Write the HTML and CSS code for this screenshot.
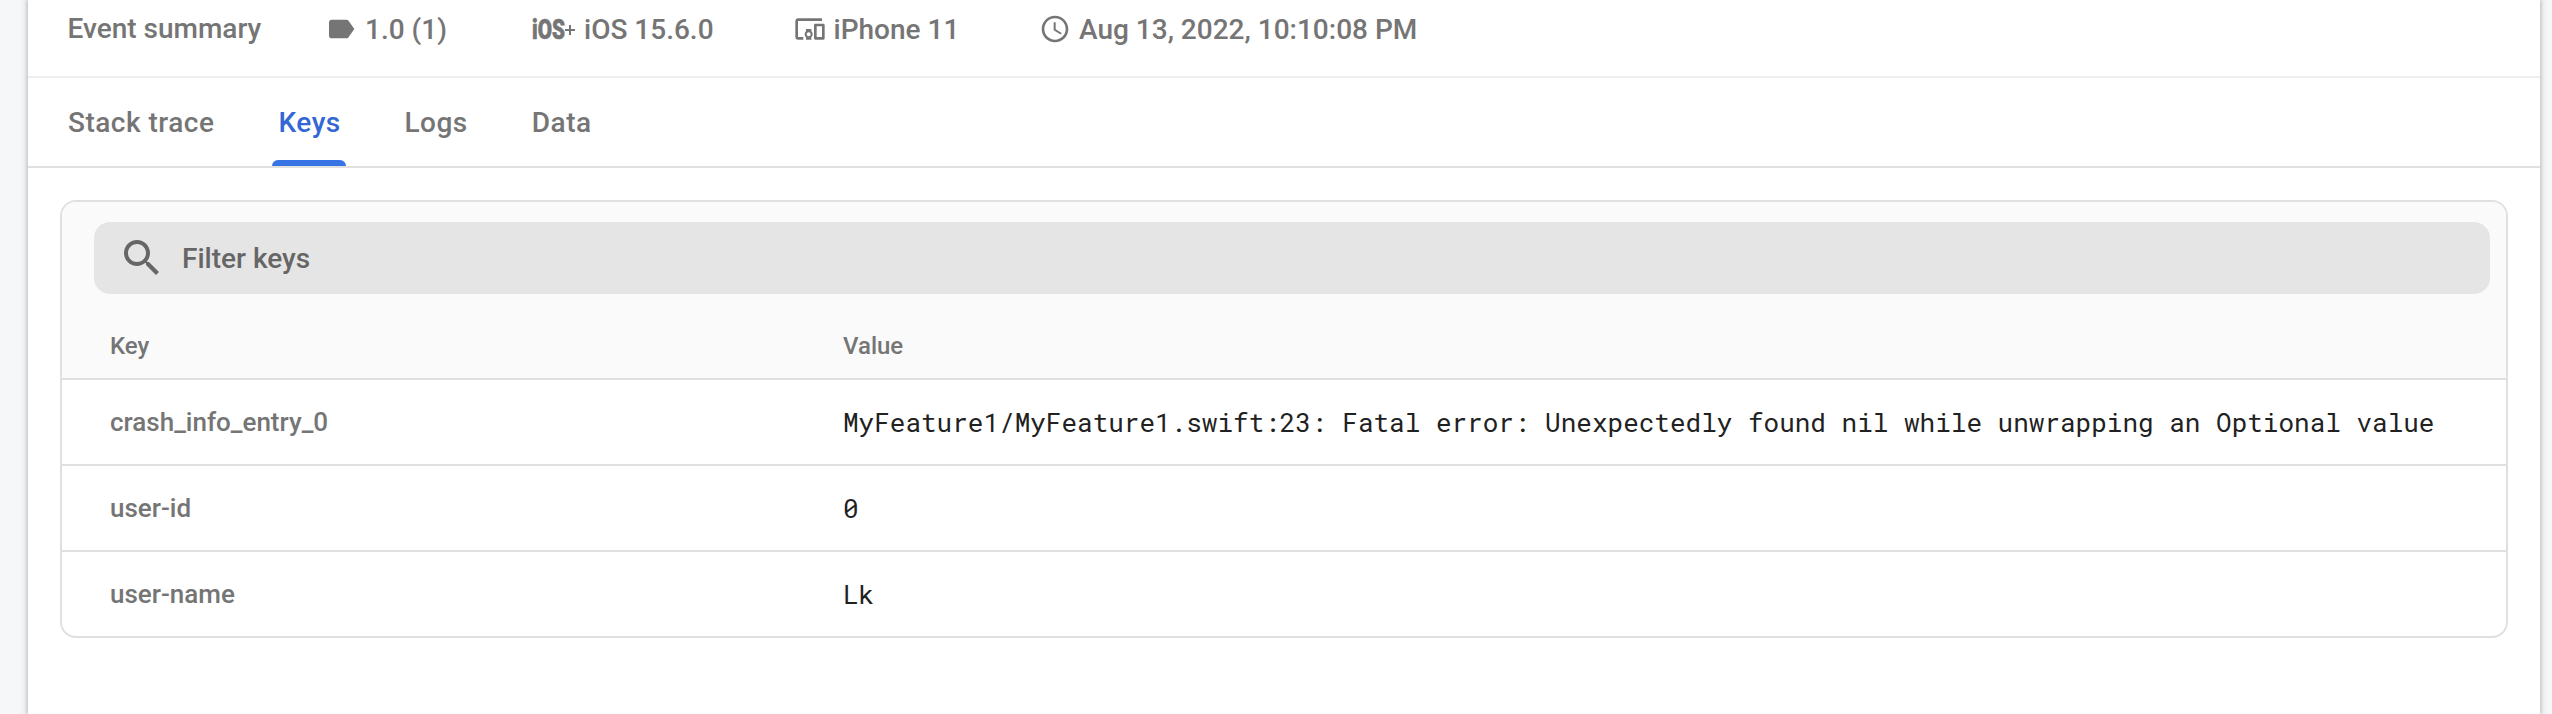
FILE: index.html
```
<!DOCTYPE html>
<html lang="en">
<head>
<meta charset="utf-8">
<title>Event summary</title>
<link rel="stylesheet" href="styles.css">
</head>
<body>
<main class="card">
  <header class="summary">
    <span class="summary-title">Event summary</span>
    <span class="summary-item version">
      <svg class="icon" viewBox="0 0 24 24"><path d="M17.63 5.84C17.27 5.33 16.67 5 16 5L5 5.01C3.9 5.01 3 5.9 3 7v10c0 1.1.9 1.99 2 1.99L16 19c.67 0 1.27-.33 1.63-.84L22 12l-4.37-6.16z"/></svg>
      <span>1.0 (1)</span>
    </span>
    <span class="summary-item platform">
      <svg class="ios-logo" viewBox="0 0 44 32"><text class="ios-name" x="0" y="26" textLength="33" lengthAdjust="spacingAndGlyphs">iOS</text><path d="M33 17h10M38 12v10" fill="none" stroke="currentColor" stroke-width="2"/></svg>
      <span>iOS 15.6.0</span>
    </span>
    <span class="summary-item device">
      <svg class="icon" viewBox="0 0 24 24"><path d="M3 6h18V4H3c-1.100 0-2 .9-2 2v12c0 1.100.9 2 2 2h4v-2H3V6zm10 6H9v1.780c-.61.55-1 1.330-1 2.220s.39 1.670 1 2.220V20h4v-1.780c.61-.55 1-1.340 1-2.220s-.39-1.670-1-2.220V12zm-2 5.500c-.83 0-1.500-.67-1.500-1.500s.67-1.500 1.500-1.500 1.500.67 1.500 1.500-.67 1.500-1.500 1.500zM22 8h-6c-.5 0-1 .5-1 1v10c0 .5.5 1 1 1h6c.5 0 1-.5 1-1V9c0-.5-.5-1-1-1zm-1 10h-4v-8h4v8z"/></svg>
      <span>iPhone 11</span>
    </span>
    <span class="summary-item time">
      <svg class="icon" viewBox="0 0 24 24"><path d="M11.990 2C6.470 2 2 6.480 2 12s4.470 10 9.990 10C17.520 22 22 17.520 22 12S17.520 2 11.990 2zM12 20c-4.420 0-8-3.580-8-8s3.580-8 8-8 8 3.580 8 8-3.580 8-8 8zm.5-13H11v6l5.250 3.150.75-1.230-4.500-2.670z"/></svg>
      <span>Aug 13, 2022, 10:10:08 PM</span>
    </span>
  </header>
  <nav class="tabs">
    <span class="tab">Stack trace</span>
    <span class="tab active">Keys</span>
    <span class="tab">Logs</span>
    <span class="tab">Data</span>
  </nav>
  <section class="panel">
    <div class="panel-head">
      <div class="search">
        <svg class="search-icon" viewBox="0 0 24 24"><path d="M15.500 14h-.79l-.28-.27C15.410 12.590 16 11.110 16 9.500 16 5.910 13.090 3 9.500 3S3 5.910 3 9.500 5.910 16 9.500 16c1.610 0 3.090-.59 4.230-1.570l.27.28v.79l5 4.990L20.490 19l-4.990-5zm-6 0C7.010 14 5 11.990 5 9.500S7.010 5 9.500 5 14 7.010 14 9.500 11.990 14 9.500 14z"/></svg>
        <span class="search-label">Filter keys</span>
      </div>
      <div class="row head"><span>Key</span><span>Value</span></div>
    </div>
    <div class="row"><span>crash_info_entry_0</span><span class="value">MyFeature1/MyFeature1.swift:23: Fatal error: Unexpectedly found nil while unwrapping an Optional value</span></div>
    <div class="row"><span>user-id</span><span class="value">0</span></div>
    <div class="row"><span>user-name</span><span class="value">Lk</span></div>
  </section>
</main>
</body>
</html>
```
FILE: styles.css
```
* { box-sizing: border-box; }
body {
  margin: 0;
  height: 714px;
  padding: 0 12px 0 28px;
  background: #f6f7f9;
  font: 500 28px/32px Roboto, sans-serif;
  color: #757575;
  white-space: nowrap;
}
svg { display: block; flex: none; fill: currentColor; }
.card {
  height: 714px;
  background: #fff;
  box-shadow: 0 0 4px rgba(60, 64, 67, .3), 0 0 6px 2px rgba(60, 64, 67, .15);
}
.summary {
  display: flex;
  align-items: flex-start;
  height: 78px;
  padding: 13px 0 0 39.5px;
  border-bottom: 2px solid #eee;
}
.summary-title { width: 257.500px; }
.summary-item { display: flex; gap: 8px; }
.summary-item span { padding-top: 1px; }
.icon { width: 32px; height: 32px; }
.version { width: 207px; }
.platform { width: 261.500px; }
.device { width: 245px; }
.time { gap: 8.500px; }
.ios-logo { width: 44px; height: 32px; }
.ios-name {
  font: 900 28px Roboto, sans-serif;
  stroke: currentColor;
  stroke-width: .6px;
}
.tabs {
  display: flex;
  gap: 52px;
  height: 90px;
  padding-left: 34px;
  border-bottom: 2px solid #e0e0e0;
  letter-spacing: .5px;
}
.tab { padding: 29px 6px 0; }
.tab.active {
  display: flex;
  flex-direction: column;
  justify-content: space-between;
  width: 74px;
  color: #3367d6;
}
.tab.active::after {
  content: "";
  height: 6px;
  margin: 0 -6px;
  background: #3574e2;
  border-radius: 6px 6px 0 0;
}
.panel {
  margin: 32px 32px 0;
  border: 2px solid #e0e0e0;
  border-radius: 16px;
  overflow: hidden;
}
.panel-head { padding-top: 20px; background: #fafafa; }
.search {
  display: flex;
  align-items: center;
  gap: 16px;
  height: 72px;
  margin: 0 16px 0 32px;
  padding-left: 24px;
  border-radius: 16px;
  background: #e5e5e5;
  color: #666;
}
.search-icon { width: 48px; height: 48px; }
.search-label { padding-top: 2px; }
.row {
  display: grid;
  grid-template-columns: 733px 1fr;
  align-items: center;
  height: 86px;
  padding-left: 48px;
  border-top: 2px solid #e0e0e0;
  font-size: 26px;
}
.row.head { height: 84px; padding-top: 20px; border: 0; font-size: 24px; }
.value {
  font-family: "Roboto Mono", "DejaVu Sans Mono", monospace;
  font-weight: 400;
  color: #212121;
}
```
